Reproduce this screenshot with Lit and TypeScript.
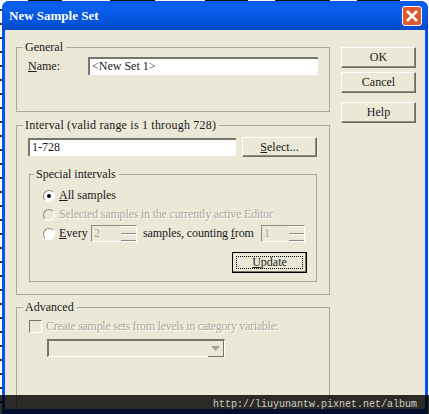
import { LitElement, css, html } from "lit";
import { customElement } from "lit/decorators.js";

@customElement("app-root")
export class AppRoot extends LitElement {
  spinner(value: string) {
    return html`<span class="spin">
      <span class="spin-value">${value}</span>
      <span class="spin-btns"><i></i><i></i></span>
    </span>`;
  }

  render() {
    return html`
      <div class="desk">
        <div class="window">
          <div class="titlebar">
            <span class="title">New Sample Set</span>
            <span class="close">
              <svg width="14" height="14" viewBox="0 0 14 14">
                <path d="M2 2L12 12M12 2L2 12" stroke="#fff" stroke-width="2.6" />
              </svg>
            </span>
          </div>
          <div class="client">
            <div class="main">
              <fieldset class="general">
                <legend>General</legend>
                <div class="name-row">
                  <label><u>N</u>ame:</label>
                  <div class="input name-input">&lt;New Set 1&gt;</div>
                </div>
              </fieldset>

              <fieldset class="interval">
                <legend>Interval (valid range is 1 through 728)</legend>
                <div class="range-row">
                  <div class="input range-input">1-728</div>
                  <button class="btn"><u>S</u>elect...</button>
                </div>
                <fieldset class="special">
                  <legend>Special intervals</legend>
                  <div class="radio-row">
                    <span class="radio on"></span>
                    <span><u>A</u>ll samples</span>
                  </div>
                  <div class="radio-row off">
                    <span class="radio grey"></span>
                    <span class="selected-label">Selected samples in the currently active Editor</span>
                  </div>
                  <div class="radio-row">
                    <span class="radio"></span>
                    <span class="every-label"><u>E</u>very</span>
                    ${this.spinner("2")}
                    <span class="samples-label">samples, counting <u>f</u>rom</span>
                    ${this.spinner("1")}
                  </div>
                  <div class="update-row">
                    <button class="btn update"><span><u>U</u>pdate</span></button>
                  </div>
                </fieldset>
              </fieldset>

              <fieldset class="advanced">
                <legend>Advanced</legend>
                <div class="check-row">
                  <span class="check"></span>
                  <span class="check-label">Create sample sets from levels in category variable:</span>
                </div>
                <div class="combo">
                  <span class="combo-arrow">
                    <svg width="9" height="5" viewBox="0 0 9 5"><path d="M0 0H9L4.500 5Z" fill="#a5a294" /></svg>
                  </span>
                </div>
              </fieldset>
            </div>
            <div class="side">
              <button class="btn">OK</button>
              <button class="btn">Cancel</button>
              <button class="btn help">Help</button>
            </div>
          </div>
        </div>
        <div class="watermark">http://liuyunantw.pixnet.net/album</div>
      </div>
    `;
  }

  static styles = css`
    :host {
      display: block;
      width: 429px;
      height: 414px;
      overflow: hidden;
      font-family: "Liberation Serif", "Times New Roman", serif;
      font-size: 12px;
      color: #1a1a1a;
    }

    /* the bits of another window peeking out behind the dialog */
    .desk {
      position: relative;
      width: 429px;
      height: 414px;
      overflow: hidden;
      box-sizing: border-box;
      padding: 1px 0 0 2px;
      background-color: #fff;
      background-image:
        linear-gradient(
          90deg,
          #fff 28px,
          #111 28px 62px,
          #fff 62px 110px,
          #111 110px 155px,
          #fff 155px 205px,
          #111 205px 248px,
          #fff 248px 275px,
          #111 275px 330px,
          #fff 330px 357px,
          #111 357px 400px,
          #fff 400px
        ),
        repeating-linear-gradient(#fff 0 9px, #333 9px 11px, #fff 11px 14px);
      background-size: 100% 1px, 2px 100%;
      background-repeat: no-repeat;
    }

    .window {
      width: 426px;
      height: 413px;
      box-sizing: border-box;
      border-radius: 7px 7px 0 0;
      background: #0650ee;
      padding: 0 3px 5px 3px;
      display: flex;
      flex-direction: column;
    }

    .titlebar {
      height: 29px;
      flex: none;
      display: flex;
      align-items: center;
      justify-content: space-between;
      padding: 0 6px 0 7px;
      border-radius: 7px 7px 0 0;
      margin: 0 -3px;
      background: linear-gradient(#0a5ae0, #0a60ee 20%, #0455dc 70%, #0448c8);
    }

    .title {
      color: #fff;
      font-weight: bold;
      font-size: 13px;
    }

    .close {
      box-sizing: border-box;
      width: 20px;
      height: 20px;
      border: 1px solid #fff;
      border-radius: 3px;
      background: #e0582e;
      display: flex;
      align-items: center;
      justify-content: center;
    }

    .client {
      flex: 1;
      min-height: 0;
      background: #ebe8d8;
      display: flex;
      padding: 10px 0 0 11px;
      overflow: hidden;
    }

    .main {
      width: 314px;
      flex: none;
    }

    .side {
      margin: 7px 0 0 11px;
      display: flex;
      flex-direction: column;
      width: 75px;
      gap: 4px;
    }

    fieldset {
      margin: 0;
      border: 1px solid #a9a89c;
      box-sizing: border-box;
      min-width: 0;
    }

    legend {
      margin-left: -5px;
      padding: 0 3px 0 2px;
      line-height: 15px;
      font-size: 12px;
    }

    .general {
      height: 72px;
      margin-bottom: 6px;
      padding: 2px 11px 0 11px;
    }

    .name-row {
      display: flex;
      align-items: center;
    }

    .name-row label {
      width: 60px;
      flex: none;
    }

    .input {
      box-sizing: border-box;
      height: 18px;
      background: #fff;
      border-top: 2px solid #77766a;
      border-left: 2px solid #77766a;
      padding-left: 2px;
      line-height: 15px;
    }

    .name-input {
      width: 230px;
    }

    .interval {
      height: 177px;
      margin-bottom: 5px;
      padding: 4px 12px 0 11px;
    }

    .interval > legend {
      letter-spacing: 0.2px;
    }

    .range-row {
      display: flex;
      align-items: center;
      gap: 6px;
    }

    .range-input {
      width: 208px;
    }

    .btn {
      box-sizing: border-box;
      width: 75px;
      height: 21px;
      padding: 0;
      background: #ebe8d8;
      color: #1a1a1a;
      font: inherit;
      border: 1px solid;
      border-color: #fff #6d6c60 #6d6c60 #fff;
      box-shadow: inset -1px -1px 0 #8b8a7e;
    }

    .range-row .btn {
      height: 20px;
    }

    .help {
      margin-top: 5px;
    }

    .special {
      margin: 10px 0 0 1px;
      height: 115px;
      padding: 4px 9px 0 13px;
    }

    .special legend {
      margin-left: -9px;
    }

    .radio-row {
      display: flex;
      align-items: center;
      height: 19px;
      gap: 4px;
    }

    .off {
      color: #aca899;
      text-shadow: 1px 1px 0 #fff;
    }

    .selected-label {
      letter-spacing: -0.2px;
      white-space: nowrap;
    }

    .every-label {
      width: 28px;
      flex: none;
    }

    .samples-label {
      width: 112px;
      flex: none;
      margin: 0 2px;
      white-space: nowrap;
      letter-spacing: -0.1px;
    }

    .radio {
      box-sizing: border-box;
      width: 12px;
      height: 12px;
      flex: none;
      border-radius: 50%;
      background: #fff;
      border: 1px solid;
      border-color: #8b8a7e #fff #fff #8b8a7e;
      position: relative;
    }

    .radio.grey {
      background: #ebe8d8;
    }

    .radio.on::after {
      content: "";
      position: absolute;
      left: 3px;
      top: 3px;
      width: 4px;
      height: 4px;
      border-radius: 50%;
      background: #000;
    }

    .spin {
      box-sizing: border-box;
      width: 46px;
      height: 17px;
      flex: none;
      display: flex;
      justify-content: space-between;
      border-top: 1px solid #8b8a7e;
      border-left: 1px solid #8b8a7e;
      border-right: 1px solid #fff;
      border-bottom: 1px solid #fff;
      color: #aca899;
      padding-left: 2px;
      line-height: 15px;
    }

    .spin:last-child {
      width: 44px;
    }

    .spin-btns {
      display: flex;
      flex-direction: column;
      width: 15px;
      height: 15px;
    }

    .spin-btns i {
      flex: 1;
      border-bottom: 1px solid #8b8a7e;
      border-top: 1px solid #fff;
    }

    .update-row {
      display: flex;
      justify-content: flex-end;
      margin-top: 9px;
    }

    .update {
      border: 1px solid #000;
      box-shadow: inset -1px -1px 0 #77766a;
      padding: 3px;
    }

    .update span {
      display: block;
      height: 100%;
      box-sizing: border-box;
      border: 1px dotted #000;
      line-height: 11px;
    }

    .advanced {
      height: 115px;
      padding: 4px 12px 0 12px;
      color: #aca899;
    }

    .advanced legend {
      margin-left: -6px;
      color: #1a1a1a;
    }

    .check-row {
      display: flex;
      align-items: center;
      height: 15px;
      gap: 4px;
      text-shadow: 1px 1px 0 #fff;
    }

    .check-label {
      white-space: nowrap;
      letter-spacing: -0.3px;
    }

    .check {
      box-sizing: border-box;
      width: 13px;
      height: 13px;
      flex: none;
      border: 1px solid;
      border-color: #77766a #fff #fff #77766a;
    }

    .combo {
      box-sizing: border-box;
      margin: 5px 0 0 18px;
      width: 178px;
      height: 18px;
      border-top: 2px solid #77766a;
      border-left: 2px solid #77766a;
      border-right: 1px solid #fff;
      border-bottom: 1px solid #fff;
      display: flex;
      justify-content: flex-end;
    }

    .combo-arrow {
      width: 15px;
      height: 15px;
      display: flex;
      align-items: center;
      justify-content: center;
      border-right: 1px solid #77766a;
      border-bottom: 1px solid #77766a;
    }

    .watermark {
      position: absolute;
      left: 0;
      right: 0;
      bottom: 0;
      height: 19px;
      padding: 1px 12px 0 0;
      box-sizing: border-box;
      text-align: right;
      background: rgba(0, 0, 0, 0.82);
      color: #d0d0c8;
      font-family: "Liberation Mono", monospace;
      font-size: 10px;
      line-height: 18px;
    }
  `;
}

declare global {
  interface HTMLElementTagNameMap {
    "app-root": AppRoot;
  }
}
